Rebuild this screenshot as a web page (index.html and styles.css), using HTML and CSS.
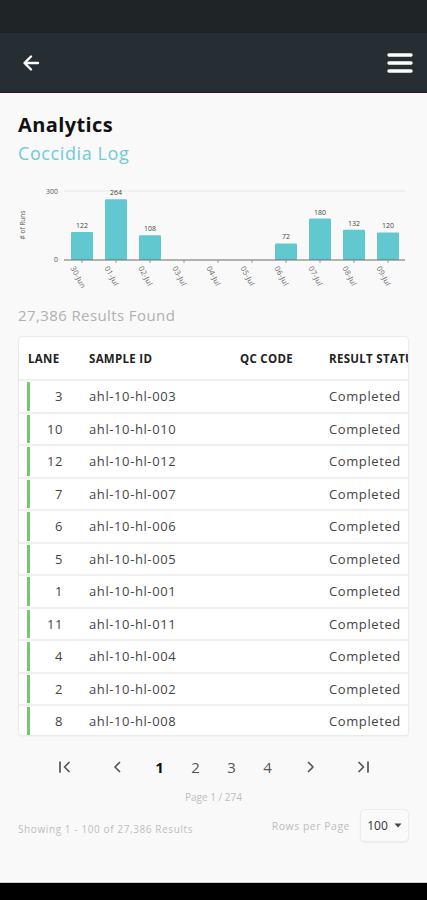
FILE: index.html
```html
<!DOCTYPE html>
<html>
<head>
<meta charset="utf-8">
<link rel="stylesheet" href="styles.css">
</head>
<body>
<div class="status"></div>
<header class="appbar">
  <svg class="back" width="20" height="20" viewBox="0 0 20 20"><path d="M17 10H4M10 3.5L3.5 10 10 16.5" fill="none" stroke="#fff" stroke-width="2.4" stroke-linecap="round" stroke-linejoin="round"/></svg>
  <svg class="menu" width="26" height="22" viewBox="0 0 26 22"><path d="M2 3h22M2 11h22M2 19h22" stroke="#fff" stroke-width="3.4" stroke-linecap="round"/></svg>
</header>
<main class="content">
  <h1 class="title">Analytics</h1>
  <h2 class="subtitle">Coccidia Log</h2>
  <svg class="chart" width="391" height="126" viewBox="18 180 391 126">
    <text class="ytitle" x="25" y="226" transform="rotate(-90 25 226)" text-anchor="middle"># of Runs</text>
    <text class="ylab" x="58" y="194.5" text-anchor="end">300</text>
    <text class="ylab" x="58" y="263" text-anchor="end">0</text>
    <line x1="64" y1="192" x2="405" y2="192" stroke="#e6e6e6" stroke-width="1"/>
    <g id="bars"></g>
    <line x1="64" y1="261" x2="405" y2="261" stroke="#6d6d6d" stroke-width="1.2"/>
  </svg>
  <p class="found">27,386 Results Found</p>
  <div class="table">
    <div class="row head">
      <div class="c lane">LANE</div>
      <div class="c sid">SAMPLE ID</div>
      <div class="c qc">QC CODE</div>
      <div class="c st">RESULT STATUS</div>
    </div>
    <div id="rows"></div>
  </div>
  <nav class="pager">
    <span class="pi first"><svg width="14" height="14" viewBox="0 0 14 14"><path d="M2 2v10M11 2.5L6.5 7 11 11.5" fill="none" stroke="#555" stroke-width="1.7" stroke-linecap="round" stroke-linejoin="round"/></svg></span>
    <span class="pi prev"><svg width="14" height="14" viewBox="0 0 14 14"><path d="M9.5 2.5L5 7l4.5 4.5" fill="none" stroke="#555" stroke-width="1.7" stroke-linecap="round" stroke-linejoin="round"/></svg></span>
    <span class="pi num active">1</span>
    <span class="pi num">2</span>
    <span class="pi num">3</span>
    <span class="pi num">4</span>
    <span class="pi next"><svg width="14" height="14" viewBox="0 0 14 14"><path d="M4.5 2.5L9 7l-4.5 4.5" fill="none" stroke="#555" stroke-width="1.7" stroke-linecap="round" stroke-linejoin="round"/></svg></span>
    <span class="pi last"><svg width="14" height="14" viewBox="0 0 14 14"><path d="M12 2v10M3 2.5L7.5 7 3 11.5" fill="none" stroke="#555" stroke-width="1.7" stroke-linecap="round" stroke-linejoin="round"/></svg></span>
  </nav>
  <p class="pageinfo">Page 1 / 274</p>
  <div class="foot">
    <span class="showing">Showing 1 - 100 of 27,386 Results</span>
    <div class="rpp">
      <span class="rpplabel">Rows per Page</span>
      <div class="select">100 <svg width="8" height="5" viewBox="0 0 8 5"><path d="M0.5 0.5h7L4 4.5z" fill="#444"/></svg></div>
    </div>
  </div>
</main>
<div class="navbar"></div>
<script>
(function(){
  var data=[["30-Jun",122],["01-Jul",264],["02-Jul",108],["03-Jul",0],["04-Jul",0],["05-Jul",0],["06-Jul",72],["07-Jul",180],["08-Jul",132],["09-Jul",120]];
  var ns="http://www.w3.org/2000/svg",g=document.getElementById("bars"),base=261,scale=69/300;
  data.forEach(function(d,i){
    var cx=82+34*i,h=d[1]*scale;
    if(d[1]>0){
      var r=document.createElementNS(ns,"rect");
      r.setAttribute("x",cx-11);r.setAttribute("y",base-h);r.setAttribute("width",22);r.setAttribute("height",h);
      r.setAttribute("rx",1);r.setAttribute("fill","#62c8cf");g.appendChild(r);
      var t=document.createElementNS(ns,"text");
      t.setAttribute("x",cx);t.setAttribute("y",base-h-4);t.setAttribute("text-anchor","middle");t.setAttribute("class","val");
      t.textContent=d[1];g.appendChild(t);
    }
    var tk=document.createElementNS(ns,"line");
    tk.setAttribute("x1",cx);tk.setAttribute("x2",cx);tk.setAttribute("y1",base);tk.setAttribute("y2",base+3);
    tk.setAttribute("stroke","#888");tk.setAttribute("stroke-width","0.8");g.appendChild(tk);
    var l=document.createElementNS(ns,"text");
    var lx=cx-10,ly=268;
    l.setAttribute("x",lx);l.setAttribute("y",ly);l.setAttribute("class","xlab");
    l.setAttribute("transform","rotate(62 "+lx+" "+ly+")");
    l.textContent=d[0];g.appendChild(l);
  });
  var rows=[[3,"003"],[10,"010"],[12,"012"],[7,"007"],[6,"006"],[5,"005"],[1,"001"],[11,"011"],[4,"004"],[2,"002"],[8,"008"],[9,"009"]];
  var c=document.getElementById("rows"),html="";
  rows.forEach(function(r){
    html+='<div class="row body"><div class="c lane"><span class="bar"></span>'+r[0]+'</div><div class="c sid">ahl-10-hl-'+r[1]+'</div><div class="c qc"></div><div class="c st">Completed</div></div>';
  });
  c.innerHTML=html;
})();
</script>
</body>
</html>
```

FILE: styles.css
```css
* { box-sizing: border-box; }
html, body { margin: 0; padding: 0; }
body {
  width: 427px;
  height: 900px;
  display: flex;
  flex-direction: column;
  background: #f9f9f9;
  font-family: "Open Sans", "Noto Sans", sans-serif;
  color: #333;
  overflow: hidden;
}
.status { height: 33px; background: #1f2427; flex: none; }
.appbar {
  height: 60px;
  flex: none;
  background: #262d33;
  border-bottom: 1px solid #1a1f22;
  display: flex;
  align-items: center;
  justify-content: space-between;
  padding: 0 14px 0 21px;
}
.back { margin-top: 1px; }
.content {
  flex: 1;
  padding: 19px 18px 0 18px;
  background: #f9f9f9;
  display: flex;
  flex-direction: column;
}
.title {
  margin: 0;
  font-size: 20px;
  line-height: 26px;
  font-weight: 700;
  letter-spacing: 0.4px;
  color: #111;
}
.subtitle {
  margin: 3px 0 0 0;
  font-size: 18px;
  line-height: 24px;
  font-weight: 400;
  letter-spacing: 0.6px;
  color: #6ccdd4;
}
.chart { display: block; margin-top: 14px; overflow: visible; }
.chart text { font-family: "Open Sans", sans-serif; }
.chart .ylab { font-size: 7px; fill: #555; }
.chart .ytitle { font-size: 6.5px; fill: #555; }
.chart .val { font-size: 7px; fill: #444; }
.chart .xlab { font-size: 7.5px; fill: #666; dominant-baseline: middle; letter-spacing: 0.3px; }
.found {
  margin: 0;
  font-size: 15px;
  line-height: 20px;
  letter-spacing: 0.4px;
  color: #b0b0b0;
}
.table {
  margin-top: 11px;
  height: 400px;
  background: #fff;
  border: 1px solid #ebebeb;
  border-radius: 4px;
  overflow: hidden;
  box-shadow: 0 1px 2px rgba(0,0,0,0.04);
}
.row {
  display: flex;
  align-items: center;
  white-space: nowrap;
}
.row.head {
  height: 44px;
  font-size: 11.5px;
  font-weight: 700;
  letter-spacing: 0.3px;
  color: #222;
  border-bottom: 2px solid #f0f0f0;
}
.row.body {
  height: 32.5px;
  font-size: 13px;
  letter-spacing: 0.6px;
  color: #444;
  border-bottom: 2px solid #f0f0f0;
}
.c { flex: none; overflow: hidden; }
.lane { width: 70px; }
.head .lane { padding-left: 9px; }
.body .lane {
  position: relative;
  align-self: stretch;
  display: flex;
  align-items: center;
  justify-content: flex-end;
  padding-right: 26px;
}
.bar {
  position: absolute;
  left: 8px;
  top: 1px;
  bottom: 1px;
  width: 3px;
  background: #74c774;
}
.sid { width: 151px; }
.qc { width: 89px; }
.st { flex: 1; }
.pager {
  display: flex;
  justify-content: center;
  align-items: center;
  margin-top: 19px;
  height: 24px;
}
.pi {
  width: 36px;
  display: flex;
  justify-content: center;
  align-items: center;
  font-size: 15px;
  color: #555;
}
.pi.active { color: #111; font-weight: 700; }
.first { margin-right: 16px; }
.prev { margin-right: 7px; }
.next { margin-left: 7px; }
.last { margin-left: 16px; }
.pageinfo {
  margin: 11px 0 0 0;
  text-align: center;
  font-size: 10px;
  line-height: 14px;
  color: #bdbdbd;
}
.foot {
  display: flex;
  justify-content: space-between;
  align-items: center;
  margin-top: 5px;
}
.showing { font-size: 10px; letter-spacing: 0.6px; color: #bdbdbd; margin-top: 7px; }
.rpp { display: flex; align-items: center; gap: 10px; }
.rpplabel { font-size: 10.5px; letter-spacing: 0.5px; color: #bdbdbd; }
.select {
  width: 49px;
  height: 33px;
  border: 1px solid #ececec;
  border-radius: 5px;
  background: #fafafa;
  display: flex;
  align-items: center;
  justify-content: center;
  gap: 6px;
  font-size: 12px;
  color: #333;
  box-shadow: 0 1px 2px rgba(0,0,0,0.05);
}
.navbar { height: 18px; flex: none; background: #000; border-top: 1px solid #ccc; }
```
